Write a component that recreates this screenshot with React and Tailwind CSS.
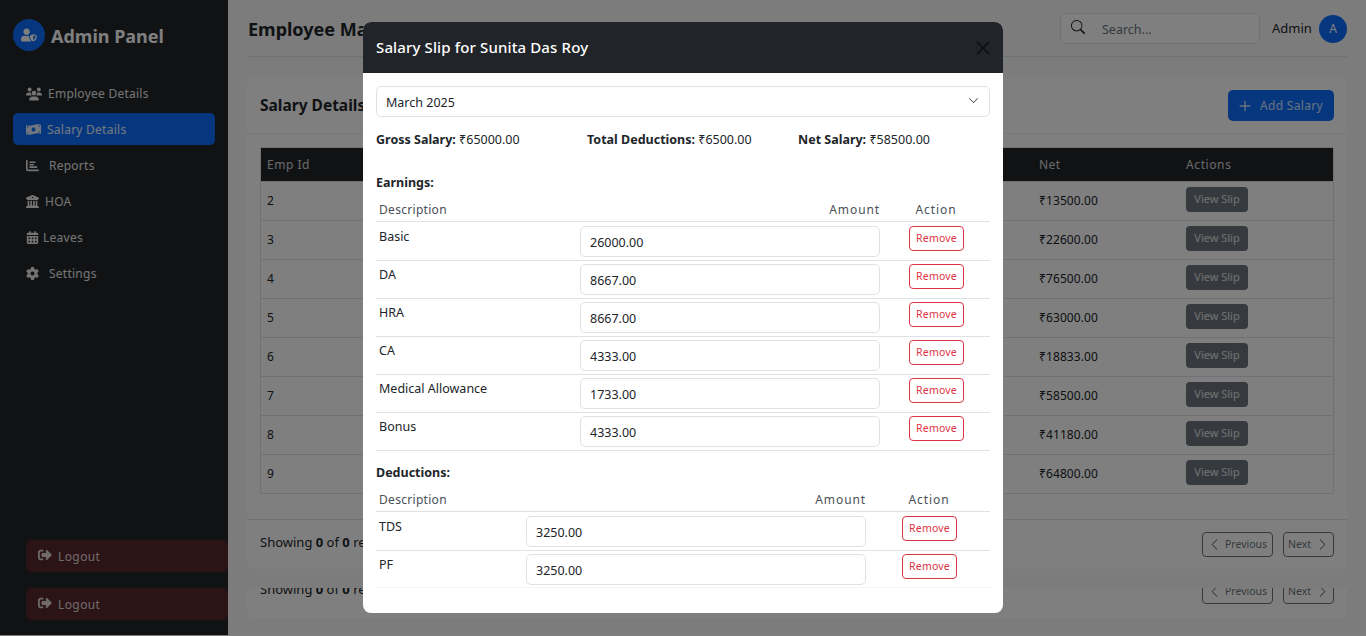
import { FaUserShield, FaSignOutAlt, FaMoneyBillWave } from 'react-icons/fa';
import { FaUsers, FaChartBar, FaBuildingColumns, FaCalendarDays, FaGear } from 'react-icons/fa6';
import { BsSearch, BsPlus, BsChevronLeft, BsChevronRight, BsChevronDown } from 'react-icons/bs';

const font = { fontFamily: '"Noto Sans", "Liberation Sans", sans-serif' };

const navItems = [
  { label: 'Employee Details', icon: FaUsers, gap: 'gap-[6px]', size: 16 },
  { label: 'Salary Details', icon: FaMoneyBillWave, gap: 'gap-[6px]', size: 15, active: true },
  { label: 'Reports', icon: FaChartBar, gap: 'gap-[10px]', size: 13 },
  { label: 'HOA', icon: FaBuildingColumns, gap: 'gap-[6px]', size: 13 },
  { label: 'Leaves', icon: FaCalendarDays, gap: 'gap-[4px]', size: 13 },
  { label: 'Settings', icon: FaGear, gap: 'gap-[10px]', size: 13 },
];

const salaryRows = [
  [2, '₹13500.00'],
  [3, '₹22600.00'],
  [4, '₹76500.00'],
  [5, '₹63000.00'],
  [6, '₹18833.00'],
  [7, '₹58500.00'],
  [8, '₹41180.00'],
  [9, '₹64800.00'],
];

const earnings = [
  ['Basic', '26000.00'],
  ['DA', '8667.00'],
  ['HRA', '8667.00'],
  ['CA', '4333.00'],
  ['Medical Allowance', '1733.00'],
  ['Bonus', '4333.00'],
];

const deductions = [
  ['TDS', '3250.00'],
  ['PF', '3250.00'],
];

function LogoutButton() {
  return (
    <div className="flex h-[32px] w-[202px] items-center gap-[6px] rounded-[5px] bg-[#56262c] pl-[12px] text-[12px] text-white/80">
      <FaSignOutAlt size={14} className="-mt-[2px]" />
      <span className="mt-[2px] tracking-[0.4px]">Logout</span>
    </div>
  );
}

function Sidebar() {
  return (
    <aside className="flex h-[635px] w-[228px] shrink-0 flex-col bg-[#212529] text-white">
      <div className="flex items-center gap-[6px] pl-[13px] pt-[19px]">
        <div className="flex h-[32px] w-[32px] items-center justify-center rounded-full bg-[#0d6efd]">
          <FaUserShield size={16} />
        </div>
        <span className="mt-[2px] text-[18px] font-bold">Admin Panel</span>
      </div>
      <nav className="mt-[26px] flex flex-col gap-[4px] px-[13px]">
        {navItems.map(({ label, icon: Icon, gap, size, active }) => (
          <div key={label} className={`flex h-[32px] items-center rounded-[5px] pl-[13px] pt-[1px] text-[12px] tracking-[0.25px] text-white/90 ${gap} ${active ? 'bg-[#0d6efd]' : ''}`}>
            <Icon size={size} />
            <span>{label}</span>
          </div>
        ))}
      </nav>
      <div className="mt-auto flex flex-col gap-[16px] pb-[15px] pl-[26px]">
        <LogoutButton />
        <LogoutButton />
      </div>
    </aside>
  );
}

function Pager() {
  return (
    <div className="flex items-center justify-between text-[13px] text-[#212529]">
      <span className="-mt-[4px]">Showing <b>0</b> of <b>0</b> records</span>
      <div className="flex gap-[10px] text-[10.5px] text-[#6c757d]">
        <div className="flex h-[25px] w-[71px] items-center justify-center gap-[4px] rounded-[4px] border border-[#6c757d]">
          <BsChevronLeft size={13} /> Previous
        </div>
        <div className="flex h-[25px] w-[51px] items-center justify-center gap-[5px] rounded-[4px] border border-[#6c757d]">
          Next <BsChevronRight size={13} />
        </div>
      </div>
    </div>
  );
}

function Main() {
  return (
    <main className="h-[635px] flex-1 overflow-hidden bg-[#f8f9fa] px-[19px]">
      <header className="flex h-[57px] items-start justify-between border-b border-[#dee2e6] pt-[13px]">
        <h1 className="pl-[1px] text-[18px] font-bold leading-[32px] text-[#212529]">Employee Management</h1>
        <div className="flex items-center">
          <div className="flex h-[31px] w-[200px] items-center rounded-[5px] border border-[#dee2e6] bg-white pl-[10px] pt-[3px] text-[12.5px] text-[#6c757d]">
            <BsSearch size={14} className="-mt-[6px] text-[#212529]" />
            <span className="ml-[17px]">Search...</span>
          </div>
          <span className="ml-[12px] w-[40px] whitespace-nowrap text-[13px] text-[#212529]">Admin</span>
          <div className="ml-[7px] flex h-[28px] w-[28px] items-center justify-center rounded-full bg-[#0d6efd] text-[12px] text-white">A</div>
        </div>
      </header>

      <section className="mt-[20px] rounded-[8px] bg-white">
        <div className="flex h-[57px] items-center justify-between border-b border-[#f0f0f0] px-[13px]">
          <h2 className="pt-[2px] text-[15.5px] font-bold text-[#212529]">Salary Details</h2>
          <div className="flex h-[31px] w-[106px] items-center justify-center gap-[4px] rounded-[5px] bg-[#0d6efd] pr-[5px] pt-[1px] text-[12px] tracking-[0.3px] text-white/80">
            <BsPlus size={22} /> Add Salary
          </div>
        </div>
        <div className="px-[13px] pb-[25px] pt-[13px]">
          <div className="border border-[#dee2e6] text-[12px] text-[#212529]">
            <div className="flex h-[33px] items-center bg-[#212529] text-white/80">
              <span className="w-[778px] pl-[6px] tracking-[0.5px]">Emp Id</span>
              <span className="w-[147px] tracking-[0.4px]">Net</span>
              <span className="tracking-[0.6px]">Actions</span>
            </div>
            {salaryRows.map(([id, net]) => (
              <div key={id} className="flex h-[39px] items-center border-t border-[#dee2e6]">
                <span className="w-[778px] pl-[6px]">{id}</span>
                <span className="w-[147px] tracking-[0.1px]">{net}</span>
                <span className="-mt-[4px] flex h-[25px] w-[62px] items-center justify-center rounded-[4px] bg-[#6c757d] text-[11px] text-white/80">View Slip</span>
              </div>
            ))}
          </div>
        </div>
        <div className="h-[50px] border-t border-[#dee2e6] px-[13px] pt-[12px]">
          <Pager />
        </div>
      </section>

      <section className="mt-[19px] overflow-hidden rounded-b-[8px] bg-white px-[13px] pb-[14px]">
        <div className="-mt-[9px]">
          <Pager />
        </div>
      </section>
    </main>
  );
}

function SlipTable({ rows, descWidth, inputWidth, actionWidth, removeInset, lightLast }) {
  return (
    <div className="text-[12.5px] text-[#212529]">
      <div className="flex h-[28px] items-end border-b border-[#dee2e6] pb-[2px] text-[12px] text-[#495057]">
        <span className="pl-[3px] tracking-[0.3px]" style={{ width: descWidth }}>Description</span>
        <span className="text-right tracking-[0.9px]" style={{ width: inputWidth }}>Amount</span>
        <span className="pl-[2px] text-center tracking-[0.9px]" style={{ width: actionWidth }}>Action</span>
      </div>
      <div>
        {rows.map(([name, amount], i) => {
          const isLight = lightLast && i === rows.length - 1;
          return (
            <div
              key={name}
              className={`flex items-start border-b pt-[3px] first:h-[39px] first:pt-[4px] ${isLight ? 'h-[37px] border-[#f3f4f6]' : 'h-[38px] border-[#dee2e6]'}`}
            >
              <span className="pl-[3px] pt-[1px] leading-[20px]" style={{ width: descWidth }}>{name}</span>
              <div className="flex h-[31px] items-center rounded-[5px] border border-[#dee2e6] pl-[9px] pt-[3px]" style={{ width: inputWidth }}>{amount}</div>
              <div style={{ width: actionWidth, paddingLeft: removeInset }}>
                <span className="flex h-[25px] w-[55px] items-center justify-center rounded-[4px] border border-[#dc3545] text-[10.5px] tracking-[0.2px] text-[#dc3545]">Remove</span>
              </div>
            </div>
          );
        })}
      </div>
    </div>
  );
}

function SalaryModal() {
  return (
    <div className="absolute inset-0 flex justify-center bg-black/50">
      <div className="mt-[22px] h-[591px] w-[640px] overflow-hidden rounded-[8px] bg-white">
        <div className="flex h-[51px] items-center justify-between bg-[#212529] pl-[13px] pr-[13px]">
          <h3 className="text-[15px] font-medium tracking-[0.13px] text-white">Salary Slip for Sunita Das Roy</h3>
          <svg width="14" height="14" viewBox="0 0 14 14" className="opacity-60">
            <path d="M1 1l12 12M13 1L1 13" stroke="#000" strokeWidth="1.6" />
          </svg>
        </div>
        <div className="px-[13px] pt-[13px]">
          <div className="flex h-[31px] items-center justify-between rounded-[5px] border border-[#dee2e6] pl-[9px] pr-[10px] text-[12.5px] text-[#212529]">
            <span className="pt-[3px]">March 2025</span>
            <BsChevronDown size={11} className="-mt-[3px] text-[#343a40]" />
          </div>
          <div className="mt-[14px] grid grid-cols-[211px_211px_1fr] text-[12.5px] leading-[18px] text-[#212529]">
            <span><b>Gross Salary:</b> ₹65000.00</span>
            <span><b>Total Deductions:</b> ₹6500.00</span>
            <span><b>Net Salary:</b> ₹58500.00</span>
          </div>
          <h4 className="mt-[25px] text-[12.5px] font-bold leading-[18px] text-[#212529]">Earnings:</h4>
          <div className="mt-[2px]">
            <SlipTable rows={earnings} descWidth={204} inputWidth={300} actionWidth={110} removeInset={29} />
          </div>
          <h4 className="mt-[13px] text-[12.5px] font-bold leading-[18px] text-[#212529]">Deductions:</h4>
          <div className="mt-[2px]">
            <SlipTable rows={deductions} descWidth={150} inputWidth={340} actionWidth={124} removeInset={36} lightLast />
          </div>
        </div>
      </div>
    </div>
  );
}

export default function App() {
  return (
    <div className="relative h-[636px] w-[1366px] overflow-hidden bg-white" style={font}>
      <div className="flex">
        <Sidebar />
        <Main />
      </div>
      <SalaryModal />
    </div>
  );
}
